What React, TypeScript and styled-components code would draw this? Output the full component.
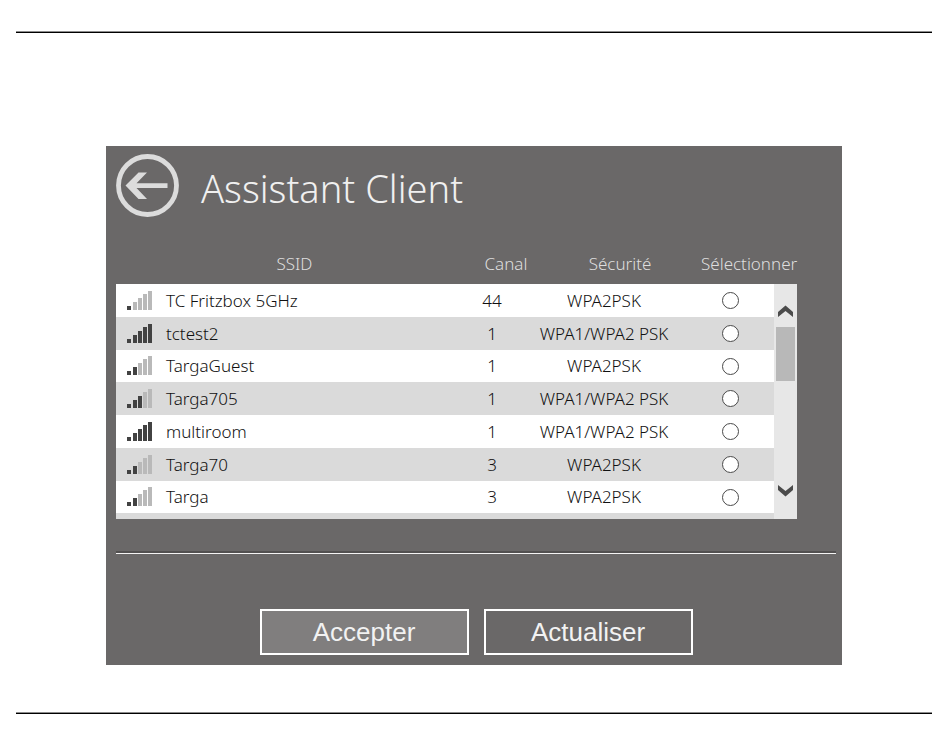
import React, { useState } from "react";
import styled, { createGlobalStyle } from "styled-components";

const GlobalStyle = createGlobalStyle`
  *, *::before, *::after { box-sizing: border-box; }
  body {
    margin: 0;
    background: #fff;
    font-family: "Noto Sans", "Open Sans", sans-serif;
  }
`;

const Page = styled.div`
  min-height: 100vh;
  display: flex;
  flex-direction: column;
  padding: 31px 18px 31px 16px;
`;

const PageRule = styled.hr`
  width: 100%;
  height: 2px;
  margin: 0;
  border: 0;
  background: #000;
  border-top: 1px solid #8c8c8c;
`;

const Panel = styled.main`
  margin: 113px 90px 47px;
  padding: 8px 6px 10px 10px;
  background: #6a6868;
`;

const Header = styled.header`
  display: flex;
  align-items: center;
  gap: 22px;
`;

const BackButton = styled.button`
  display: flex;
  padding: 0;
  border: 0;
  background: none;
`;

const Title = styled.h1`
  margin: 0;
  padding-top: 4px;
  font-size: 38px;
  line-height: 48px;
  font-weight: 300;
  color: #f0f0f0;
`;

const NetworkList = styled.div`
  margin: 27px 39px 0 0;
  display: grid;
  grid-template-columns: minmax(0, 1fr) 23px;
  grid-template-rows: 40px 235px;
`;

const Table = styled.table`
  display: contents;
`;

const TableHead = styled.thead`
  grid-column: 1 / -1;
  display: block;
  font-size: 17px;
  line-height: 20px;
  color: #dedede;
`;

const HeadRow = styled.tr`
  height: 100%;
  display: grid;
  grid-template-columns: minmax(0, 1fr) 66px 162px 96px;
  align-items: center;
`;

const HeadCell = styled.th`
  padding: 0;
  font-weight: 300;
  text-align: center;
`;

const TableBody = styled.tbody`
  display: block;
  overflow: hidden;
  background: #fff;
  font-size: 17px;
  line-height: 20px;
  color: #111;
`;

const Row = styled.tr`
  height: 33px;
  padding-right: 8px;
  display: grid;
  grid-template-columns: 50px minmax(0, 1fr) 44px 180px 72px;
  align-items: center;
  font-weight: 300;

  &:nth-child(even) { background: #dadada; }
  &:nth-child(4n + 3) { height: 32px; }
`;

const Cell = styled.td<{ $align?: "left" | "center" }>`
  display: flex;
  align-items: center;
  justify-content: ${(p) => (p.$align === "center" ? "center" : "flex-start")};
  padding: 0;
  white-space: nowrap;
`;

const SignalCell = styled(Cell)`
  padding-left: 11px;
`;

const Radio = styled.input`
  appearance: none;
  width: 17px;
  height: 17px;
  margin: 0;
  border: 1px solid #4a4a4a;
  border-radius: 50%;
  background: #fff;

  &:checked { background: radial-gradient(#333 0 4px, #fff 5px); }
`;

const ScrollBar = styled.div`
  display: grid;
  grid-template-rows: 43px 1fr 43px;
  background: #e7e7e7;
`;

const ScrollButton = styled.button<{ $end?: boolean }>`
  display: flex;
  justify-content: center;
  align-items: ${(p) => (p.$end ? "flex-start" : "flex-end")};
  padding: 9px 0 10px;
  border: 0;
  background: none;
`;

const ScrollTrack = styled.div`
  padding: 0 2px;
`;

const ScrollThumb = styled.div`
  height: 54px;
  background: #b8b8b8;
`;

const Divider = styled.hr`
  height: 3px;
  margin: 32px 0 0;
  border: 0;
  border-top: 2px solid #525050;
  border-bottom: 1px solid #f4f4f4;
`;

const Actions = styled.footer`
  margin-top: 55px;
  display: flex;
  justify-content: center;
  gap: 15px;
`;

const ActionButton = styled.button<{ $primary?: boolean }>`
  width: 209px;
  height: 46px;
  padding: 0;
  border: 2px solid #fff;
  background: ${(p) => (p.$primary ? "#807e7e" : "transparent")};
  color: #f2f2f2;
  font-family: "Liberation Sans", Arial, sans-serif;
  font-size: 26px;
  line-height: 30px;
`;

const BARS = [
  { x: 0, height: 4 },
  { x: 6, height: 8 },
  { x: 11, height: 12 },
  { x: 16, height: 16 },
  { x: 21, height: 19 },
];

function Signal({ level }: { level: number }) {
  return (
    <svg width="25" height="20" viewBox="0 0 25 20" role="img" aria-label={`Signal ${level}/5`}>
      {BARS.map((bar, i) => (
        <rect
          key={bar.x}
          x={bar.x}
          y={19 - bar.height}
          width="4"
          height={bar.height}
          fill={i < level ? "#424242" : "#b9b9b9"}
        />
      ))}
    </svg>
  );
}

function BackIcon() {
  return (
    <svg width="63" height="63" viewBox="0 0 63 63" aria-hidden="true">
      <circle cx="31.5" cy="31.5" r="29" fill="none" stroke="#dcdcdc" strokeWidth="4.8" />
      <path
        d="M9.5 31.5 L22.5 18.5 H31 L20.5 29.2 H51.5 V34 H20.5 L31 45 H22.5 Z"
        fill="#dcdcdc"
      />
    </svg>
  );
}

function Chevron({ down }: { down?: boolean }) {
  return (
    <svg width="17" height="12" viewBox="0 0 17 12" aria-hidden="true">
      <path
        d={down ? "M1 0 L8.5 6 L16 0 V5 L8.5 11.5 L1 5 Z" : "M1 12 L8.5 6 L16 12 V7 L8.5 0.5 L1 7 Z"}
        fill="#4b4b4b"
      />
    </svg>
  );
}

const NETWORKS = [
  { ssid: "TC Fritzbox 5GHz", channel: 44, security: "WPA2PSK", level: 1 },
  { ssid: "tctest2", channel: 1, security: "WPA1/WPA2 PSK", level: 5 },
  { ssid: "TargaGuest", channel: 1, security: "WPA2PSK", level: 2 },
  { ssid: "Targa705", channel: 1, security: "WPA1/WPA2 PSK", level: 3 },
  { ssid: "multiroom", channel: 1, security: "WPA1/WPA2 PSK", level: 5 },
  { ssid: "Targa70", channel: 3, security: "WPA2PSK", level: 2 },
  { ssid: "Targa", channel: 3, security: "WPA2PSK", level: 2 },
];

export default function App() {
  const [selected, setSelected] = useState<string | null>(null);

  return (
    <>
      <GlobalStyle />
      <Page>
        <PageRule />
        <Panel>
          <Header>
            <BackButton type="button" aria-label="Retour">
              <BackIcon />
            </BackButton>
            <Title>Assistant Client</Title>
          </Header>

          <NetworkList>
            <Table>
              <TableHead>
                <HeadRow>
                  <HeadCell scope="col">SSID</HeadCell>
                  <HeadCell scope="col">Canal</HeadCell>
                  <HeadCell scope="col">Sécurité</HeadCell>
                  <HeadCell scope="col">Sélectionner</HeadCell>
                </HeadRow>
              </TableHead>
              <TableBody>
                {NETWORKS.map((n) => (
                  <Row key={n.ssid}>
                    <SignalCell>
                      <Signal level={n.level} />
                    </SignalCell>
                    <Cell>{n.ssid}</Cell>
                    <Cell $align="center">{n.channel}</Cell>
                    <Cell $align="center">{n.security}</Cell>
                    <Cell $align="center">
                      <Radio
                        type="radio"
                        name="network"
                        aria-label={n.ssid}
                        checked={selected === n.ssid}
                        onChange={() => setSelected(n.ssid)}
                      />
                    </Cell>
                  </Row>
                ))}
                <Row aria-hidden="true" />
              </TableBody>
            </Table>
            <ScrollBar>
              <ScrollButton type="button" aria-label="Défiler vers le haut">
                <Chevron />
              </ScrollButton>
              <ScrollTrack>
                <ScrollThumb />
              </ScrollTrack>
              <ScrollButton type="button" $end aria-label="Défiler vers le bas">
                <Chevron down />
              </ScrollButton>
            </ScrollBar>
          </NetworkList>

          <Divider />

          <Actions>
            <ActionButton type="button" $primary>
              Accepter
            </ActionButton>
            <ActionButton type="button">Actualiser</ActionButton>
          </Actions>
        </Panel>
        <PageRule />
      </Page>
    </>
  );
}
